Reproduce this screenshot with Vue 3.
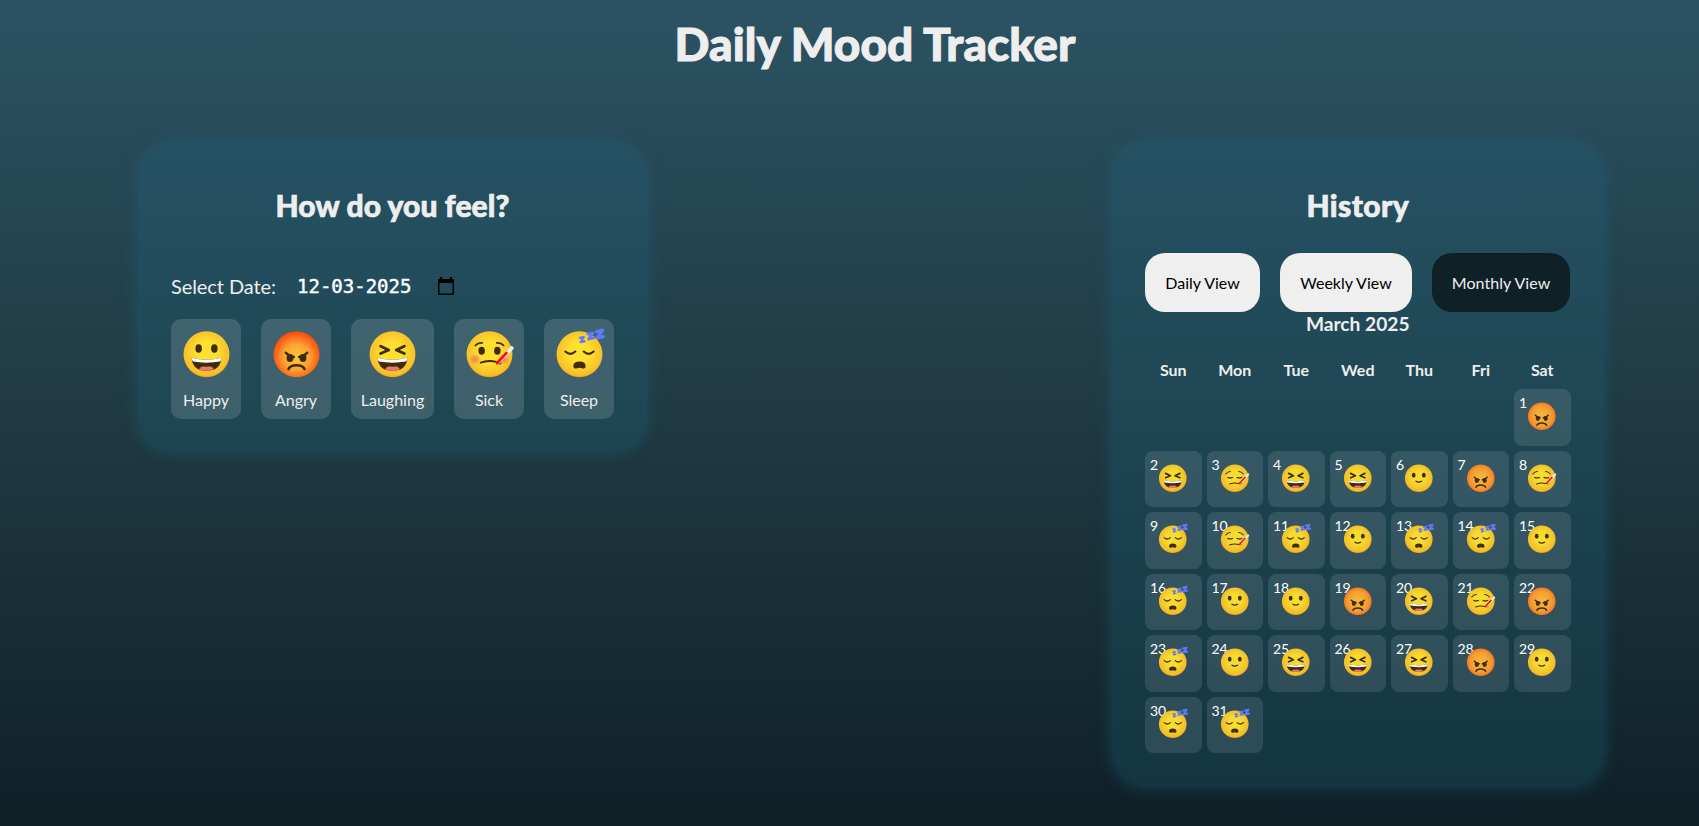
<script setup>
import { h } from 'vue'

const moods = [
  { id: 'happy', label: 'Happy' },
  { id: 'angry', label: 'Angry' },
  { id: 'laughing', label: 'Laughing' },
  { id: 'sick', label: 'Sick' },
  { id: 'sleep', label: 'Sleep' },
]
const views = ['Daily View', 'Weekly View', 'Monthly View']
const active = 'Monthly View'
const weekdays = ['Sun', 'Mon', 'Tue', 'Wed', 'Thu', 'Fri', 'Sat']
const key = { a: 'cross', l: 'laughing', t: 'tired', s: 'smile', z: 'sleep' }
const log = 'a' + 'ltllsat' + 'ztzszzs' + 'zssalta' + 'zslllas' + 'zz'
const days = log.split('').map((c, i) => ({ n: i + 1, mood: key[c] }))

const p = (d, stroke = '#422b0d', width = 5, fill = 'none') =>
  h('path', { d, stroke, 'stroke-width': width, fill, 'stroke-linecap': 'round', 'stroke-linejoin': 'round' })
const e = (cx, cy, rx, ry, fill = '#422b0d') => h('ellipse', { cx, cy, rx, ry, fill })
const grin = () => [
  p('M25 75 Q64 85 103 75 Q101 109 64 109 Q27 109 25 75Z', 'none', 0, '#422b0d'),
  p('M25 75 Q64 85 103 75 Q103 82 99 85 Q64 91 29 85 Q25 82 25 75Z', 'none', 0, '#ffffff'),
  p('M45 105 Q48 96 60 98 Q64 99 68 98 Q80 96 83 105 Q64 113 45 105Z', 'none', 0, '#ed7770'),
]
const thermo = () => [
  p('M88 85 L122 50', '#eeeeee', 10),
  p('M84 89 L108 63', '#f50f0f', 7.5),
  p('M91 92 L94 89', '#795548', 4),
]
const frown = () => [
  e(47, 76, 9, 10.5), e(81, 76, 9, 10.5),
  p('M36 62 Q43 70 57 73 M92 62 Q85 70 71 73', '#422b0d', 6.5),
  p('M43 105 Q47 95 64 95 Q81 95 85 105', '#422b0d', 6.5),
]
const parts = {
  happy: () => [e(43.5, 51, 8.5, 11), e(84.5, 51, 8.5, 11), ...grin()],
  laughing: () => [
    p('M33 45 L54 55 L33 64 M95 45 L74 55 L95 64', '#422b0d', 7.5), ...grin(),
  ],
  smile: () => [e(42, 53, 8, 10.5), e(86, 53, 8, 10.5), p('M52 79 Q64 87 76 79', '#422b0d', 6)],
  angry: frown,
  cross: frown,
  sick: () => [
    e(26, 79, 16, 15, 'url(#blush)'), e(101, 79, 16, 15, 'url(#blush)'),
    p('M27 43 Q33 36 45 36 M101 43 Q95 36 83 36', '#422b0d', 4.5),
    e(43.5, 57, 8.5, 10.5), e(84.5, 57, 8.5, 10.5),
    p('M41 88 Q60 80 82 86'), ...thermo(),
  ],
  tired: () => [
    p('M25 48 Q33 37 45 37 M101 48 Q93 37 81 37', '#422b0d', 4.5),
    p('M34 63 Q43 67 54 63 M74 63 Q84 67 94 63', '#422b0d', 5.5),
    p('M42 91 Q60 84 82 89'), ...thermo(),
  ],
  sleep: () => [
    p('M27 59 Q40 71 53 59 M75 59 Q88 71 101 59', '#422b0d', 5.5),
    p('M48 97 Q48 85 64 85 Q80 85 80 97 Q80 105 72 103 Q64 99 56 103 Q48 105 48 97Z', 'none', 0, '#422b0d'),
    p('M65 23 L75 21 L67 34 L77 32', '#5f7aff', 6),
    p('M86 13 L99 10 L88 26 L101 23', '#5f7aff', 7.5),
    p('M109 7 L124 3 L111 23 L126 20', '#5f7aff', 9),
  ],
}
const skin = { angry: 'url(#rage)', cross: 'url(#cross)' }
const Face = (props) =>
  h('svg', { viewBox: '0 0 128 128', class: ['face', props.kind] }, [
    h('circle', { cx: 64, cy: 66, r: 60, fill: skin[props.kind] || 'url(#gold)' }),
    ...parts[props.kind](),
  ])
Face.props = ['kind']
</script>

<template>
  <main class="page">
    <svg class="defs" width="0" height="0">
      <defs>
        <radialGradient id="gold" cx=".5" cy=".46" r=".55">
          <stop offset=".4" stop-color="#fde030" />
          <stop offset=".9" stop-color="#f8bf28" />
          <stop offset="1" stop-color="#ed960c" />
        </radialGradient>
        <radialGradient id="rage" cx=".5" cy=".56" r=".57">
          <stop offset=".1" stop-color="#fcc13c" />
          <stop offset=".5" stop-color="#fba233" />
          <stop offset=".87" stop-color="#fc5a14" />
          <stop offset="1" stop-color="#e94a0c" />
        </radialGradient>
        <radialGradient id="cross" cx=".5" cy=".5" r=".55">
          <stop offset=".2" stop-color="#fcb83a" />
          <stop offset=".7" stop-color="#fb9c2e" />
          <stop offset="1" stop-color="#f26a1a" />
        </radialGradient>
        <radialGradient id="blush">
          <stop offset=".2" stop-color="#f27665" stop-opacity=".8" />
          <stop offset="1" stop-color="#f27665" stop-opacity="0" />
        </radialGradient>
      </defs>
    </svg>
    <h1>Daily Mood Tracker</h1>
    <div class="columns">
      <section class="panel entry">
        <h2>How do you feel?</h2>
        <div class="date-row">
          <label>Select Date:</label>
          <span class="date">12-03-2025</span>
          <svg class="cal" viewBox="0 0 16 18">
            <path d="M0 3q0-1 1-1h1V0h2v2h8V0h2v2h1q1 0 1 1v14q0 1-1 1H1q-1 0-1-1z M1.5 6v10.5h13V6z" fill-rule="evenodd" />
          </svg>
        </div>
        <div class="moods">
          <button v-for="m in moods" :key="m.id" class="mood">
            <Face :kind="m.id" />
            <span>{{ m.label }}</span>
          </button>
        </div>
      </section>
      <section class="panel history">
        <h2>History</h2>
        <nav class="views">
          <button v-for="v in views" :key="v" :class="{ active: v === active }">{{ v }}</button>
        </nav>
        <h3>March 2025</h3>
        <div class="weekdays">
          <b v-for="w in weekdays" :key="w">{{ w }}</b>
        </div>
        <div class="grid">
          <div v-for="d in days" :key="d.n" class="day">
            <span class="num">{{ d.n }}</span>
            <Face :kind="d.mood" />
          </div>
        </div>
      </section>
    </div>
  </main>
</template>

<style>
html, body { margin: 0; overflow: hidden; }
</style>

<style scoped>
* { box-sizing: border-box; }
.page {
  height: 826px;
  overflow: hidden;
  color: #eee;
  font-family: Lato, sans-serif;
  background: linear-gradient(#2c5364, #203a43 50%, #0f2027);
}
.defs { display: block; }
button { border: 0; font: inherit; color: inherit; }
h1 {
  margin: 15px 0 0 51px;
  height: 58px;
  line-height: 58px;
  font-size: 46px;
  font-weight: 900;
  letter-spacing: .05px;
  text-align: center;
  -webkit-text-stroke: 1px #eee;
}
.columns {
  display: flex;
  justify-content: space-between;
  align-items: flex-start;
  margin: 73px 98.5px 0 141px;
}
.panel {
  padding: 30px;
  border-radius: 30px;
  background: rgba(30, 105, 128, .27);
  box-shadow: 0 0 18px rgba(31, 105, 133, .65);
}
.entry { width: 503px; height: 303px; }
.history { width: 485.5px; height: 638px; }
h2 {
  margin: 11px 0 0;
  height: 36px;
  line-height: 36px;
  font-size: 30px;
  font-weight: 900;
  letter-spacing: .1px;
  text-align: center;
  -webkit-text-stroke: .7px #eee;
}
.history h2 { letter-spacing: .4px; }
.date-row { display: flex; align-items: center; height: 24px; margin-top: 51px; font-size: 20px; }
.date-row label { width: 106px; letter-spacing: -.08px; white-space: nowrap; }
.date {
  margin-left: 20px;
  color: #fff;
  font: 19px "DejaVu Sans Mono", monospace;
  -webkit-text-stroke: .4px #fff;
}
.cal { width: 16px; height: 18px; margin-left: 27px; }
.moods { display: flex; gap: 20px; margin-top: 21px; }
.mood {
  display: flex;
  flex-direction: column;
  align-items: center;
  min-width: 70px;
  height: 100px;
  padding: 9.5px 10px;
  border-radius: 10px;
  background: rgba(255, 255, 255, .14);
  font-size: 16px;
}
.mood .face { width: 49px; height: 49px; overflow: visible; }
.mood span { margin-top: 12.5px; line-height: 20px; }
.views { display: grid; grid-template-columns: 115px 132px 138px; gap: 20px; margin-top: 30px; }
.views button {
  height: 59px;
  padding: 0;
  border-radius: 20px;
  background: #efefef;
  color: #000;
  font-size: 16px;
  white-space: nowrap;
}
.views .active { background: #0f2027; color: #eee; letter-spacing: .05px; }
h3 {
  margin: 0;
  height: 24px;
  line-height: 24px;
  font-size: 19.2px;
  font-weight: 700;
  text-align: center;
}
.weekdays, .grid { display: grid; grid-template-columns: repeat(7, 1fr); gap: 5px; }
.weekdays { margin-top: 24px; height: 29px; line-height: 20px; font-size: 16px; text-align: center; }
.day {
  position: relative;
  display: flex;
  align-items: center;
  justify-content: center;
  aspect-ratio: 1;
  border-radius: 8px;
  background: rgba(255, 255, 255, .11);
}
.day:first-child { grid-column: 7; }
.num { position: absolute; top: 5px; left: 5px; color: #fff; font-size: 14px; line-height: 17px; }
.day .face { width: 29.5px; height: 29.5px; margin: -3px 1px 0 0; overflow: visible; opacity: .97; }
</style>
